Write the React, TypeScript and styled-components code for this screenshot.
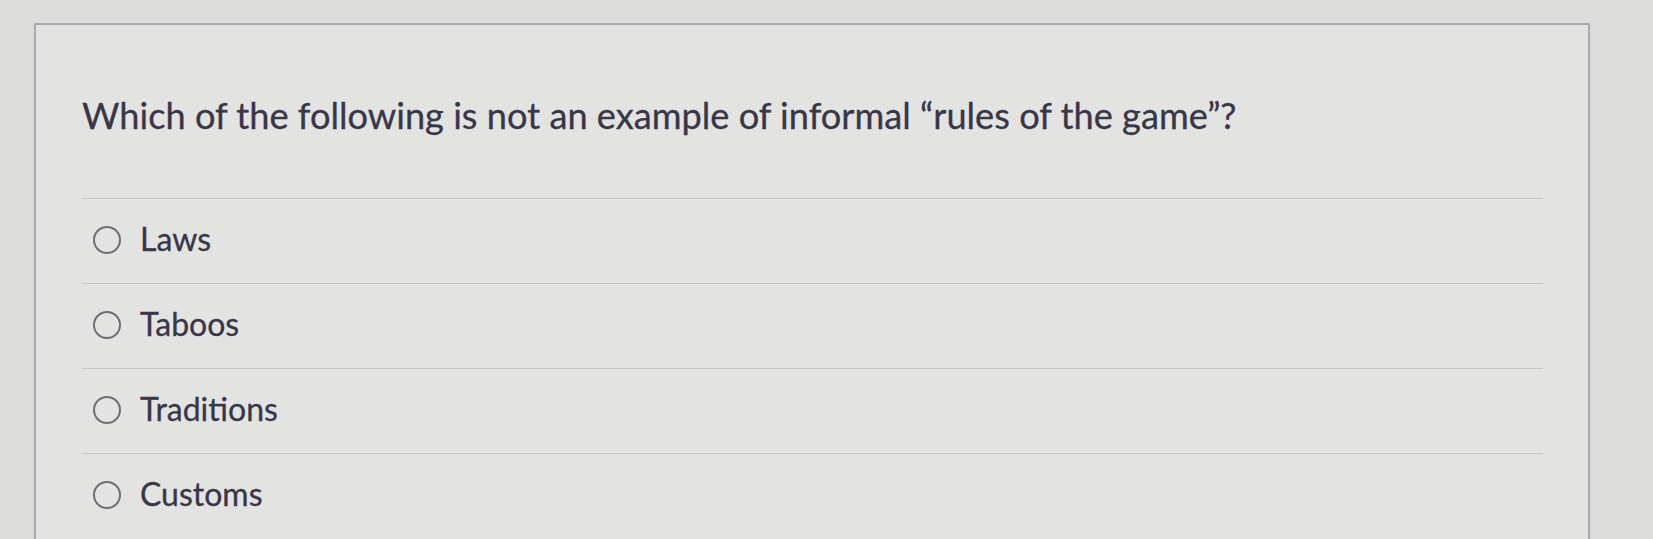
import React from "react";
import styled, { createGlobalStyle } from "styled-components";

const GlobalStyle = createGlobalStyle`
  html, body {
    margin: 0;
    padding: 0;
    background: #dfe0de;
  }
  body {
    font-family: Lato, "Open Sans", sans-serif;
  }
`;

const Page = styled.div`
  width: 1653px;
  height: 539px;
  overflow: hidden;
  padding: 23px 0 0 34px;
  box-sizing: border-box;
  background: #dcdddb;
`;

const Card = styled.section`
  width: 1556px;
  height: 540px;
  box-sizing: border-box;
  border-top: 2px solid #a9aaa9;
  border-left: 2px solid #a9aaa9;
  border-right: 2px solid #a9aaa9;
  background: #e3e4e2;
  padding: 0 45px 0 46px;
`;

const Question = styled.div`
  height: 173px;
  box-sizing: border-box;
  padding-top: 68px;
  font-size: 36.2px;
  line-height: 44px;
  color: #383647;
  -webkit-text-stroke: 0.3px #383647;
`;

const Answers = styled.div`
  display: flex;
  flex-direction: column;
`;

const Answer = styled.label`
  display: flex;
  align-items: center;
  gap: 19px;
  height: 85px;
  box-sizing: border-box;
  padding-bottom: 6px;
  border-top: 1px solid #c4c5c3;
  padding-left: 11px;
  font-size: 32px;
  color: #383647;
  -webkit-text-stroke: 0.3px #383647;
`;

const Radio = styled.span`
  width: 28px;
  height: 28px;
  border-radius: 50%;
  border: 2.5px solid #6e6e71;
  box-sizing: border-box;
  flex-shrink: 0;
  margin-top: 4px;
`;

const options = ["Laws", "Taboos", "Traditions", "Customs"];

export default function App() {
  return (
    <>
      <GlobalStyle />
      <Page>
        <Card>
          <Question>
            Which of the following is not an example of informal “rules of the game”?
          </Question>
          <Answers>
            {options.map((o) => (
              <Answer key={o}>
                <Radio />
                {o}
              </Answer>
            ))}
          </Answers>
        </Card>
      </Page>
    </>
  );
}
